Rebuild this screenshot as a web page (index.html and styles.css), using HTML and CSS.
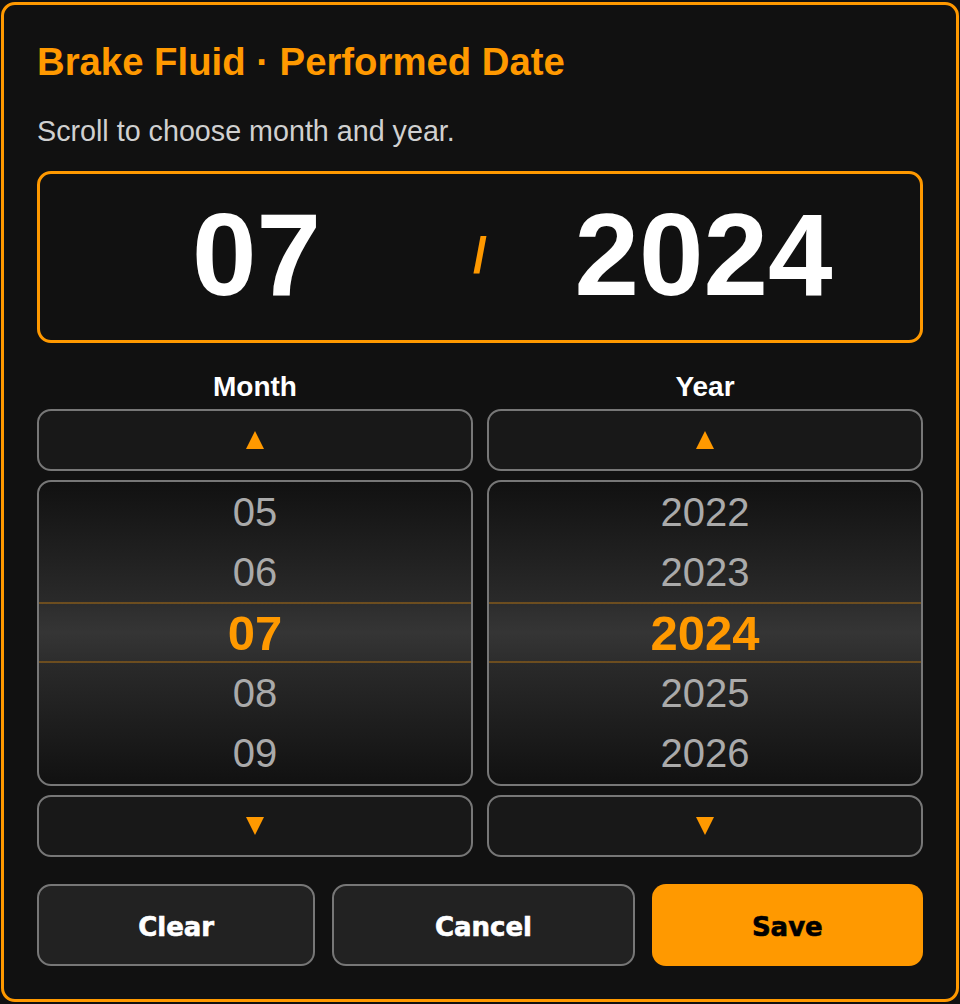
FILE: index.html
```html
<!DOCTYPE html>
<html lang="en">
<head>
    <meta charset="UTF-8">
    <meta name="viewport" content="width=device-width, initial-scale=1.0">
    <title>Performed Date</title>
    <link rel="stylesheet" href="styles.css">
</head>
<body>
    <div class="dialog">
        <h2 class="title">Brake Fluid · Performed Date</h2>
        <p class="hint">Scroll to choose month and year.</p>

        <div class="display">
            <span class="big">07</span>
            <span class="sep">/</span>
            <span class="big">2024</span>
        </div>

        <div class="pickers">
            <div class="picker">
                <div class="picker-label">Month</div>
                <button class="step" type="button">
                    <svg width="18" height="18" viewBox="0 0 18 18"><polygon points="9,0 18,18 0,18" fill="#ff9900"/></svg>
                </button>
                <div class="wheel">
                    <div class="item">05</div>
                    <div class="item">06</div>
                    <div class="item selected">07</div>
                    <div class="item">08</div>
                    <div class="item">09</div>
                </div>
                <button class="step" type="button">
                    <svg width="18" height="18" viewBox="0 0 18 18"><polygon points="0,0 18,0 9,18" fill="#ff9900"/></svg>
                </button>
            </div>

            <div class="picker">
                <div class="picker-label">Year</div>
                <button class="step" type="button">
                    <svg width="18" height="18" viewBox="0 0 18 18"><polygon points="9,0 18,18 0,18" fill="#ff9900"/></svg>
                </button>
                <div class="wheel">
                    <div class="item">2022</div>
                    <div class="item">2023</div>
                    <div class="item selected">2024</div>
                    <div class="item">2025</div>
                    <div class="item">2026</div>
                </div>
                <button class="step" type="button">
                    <svg width="18" height="18" viewBox="0 0 18 18"><polygon points="0,0 18,0 9,18" fill="#ff9900"/></svg>
                </button>
            </div>
        </div>

        <div class="actions">
            <button class="btn" type="button">Clear</button>
            <button class="btn" type="button">Cancel</button>
            <button class="btn btn-save" type="button">Save</button>
        </div>
    </div>
</body>
</html>
```

FILE: styles.css
```css
* {
  box-sizing: border-box;
}

body {
  margin: 0;
  min-height: 100vh;
  display: flex;
  align-items: center;
  justify-content: center;
  background-color: #111;
  font-family: "Liberation Sans", Arial, sans-serif;
}

/* Dialog */
.dialog {
  width: 958px;
  padding: 35px 33px 33px;
  background-color: #111;
  border: 3px solid #ff9900;
  border-radius: 14px;
}

.title {
  margin: 0;
  font-size: 38.3px;
  line-height: 44px;
  font-weight: bold;
  color: #ff9900;
}

.hint {
  margin: 31px 0 0;
  font-size: 28.7px;
  line-height: 32px;
  color: #d0d0d0;
}

/* Big value display */
.display {
  margin-top: 24px;
  height: 172px;
  padding-bottom: 4px;
  display: grid;
  grid-template-columns: 1fr auto 1fr;
  align-items: center;
  border: 3px solid #ff9900;
  border-radius: 14px;
}

.big {
  text-align: center;
  font-size: 116px;
  font-weight: bold;
  color: #fff;
}

.sep {
  font-size: 50px;
  font-weight: bold;
  color: #ff9900;
}

/* Pickers */
.pickers {
  margin-top: 28px;
  display: grid;
  grid-template-columns: 1fr 1fr;
  gap: 14px;
}

.picker {
  display: flex;
  flex-direction: column;
  gap: 9px;
}

.picker-label {
  margin-bottom: -3px;
  text-align: center;
  font-size: 28px;
  line-height: 32px;
  font-weight: bold;
  color: #fff;
}

.step {
  height: 62px;
  display: flex;
  align-items: center;
  justify-content: center;
  padding: 0;
  background-color: #181818;
  border: 2px solid #777;
  border-radius: 14px;
  cursor: pointer;
}

.wheel {
  padding: 0 0 1px;
  border: 2px solid #777;
  border-radius: 14px;
  background: linear-gradient(#111 0%, #2a2a2a 40%, #2a2a2a 60%, #111 100%);
  overflow: hidden;
}

.item {
  height: 60px;
  display: flex;
  align-items: center;
  justify-content: center;
  font-size: 40px;
  color: #aaa;
}

.item.selected {
  height: 61px;
  font-size: 49px;
  font-weight: bold;
  color: #ff9900;
  background: linear-gradient(#2d2d2d, #353535 50%, #2d2d2d);
  border-top: 2px solid rgba(255, 153, 0, 0.3);
  border-bottom: 2px solid rgba(255, 153, 0, 0.3);
}

/* Action buttons */
.actions {
  margin-top: 27px;
  display: grid;
  grid-template-columns: 278fr 302fr 271fr;
  gap: 17px;
}

.btn {
  height: 82px;
  padding: 3px 0 0;
  font-family: "DejaVu Sans", sans-serif;
  font-size: 26px;
  font-weight: bold;
  color: #fff;
  -webkit-text-stroke: 0.6px #fff;
  background-color: #222;
  border: 2px solid #777;
  border-radius: 14px;
  cursor: pointer;
}

.btn-save {
  color: #000;
  -webkit-text-stroke: 0.6px #000;
  background-color: #ff9900;
  border: none;
}
```
